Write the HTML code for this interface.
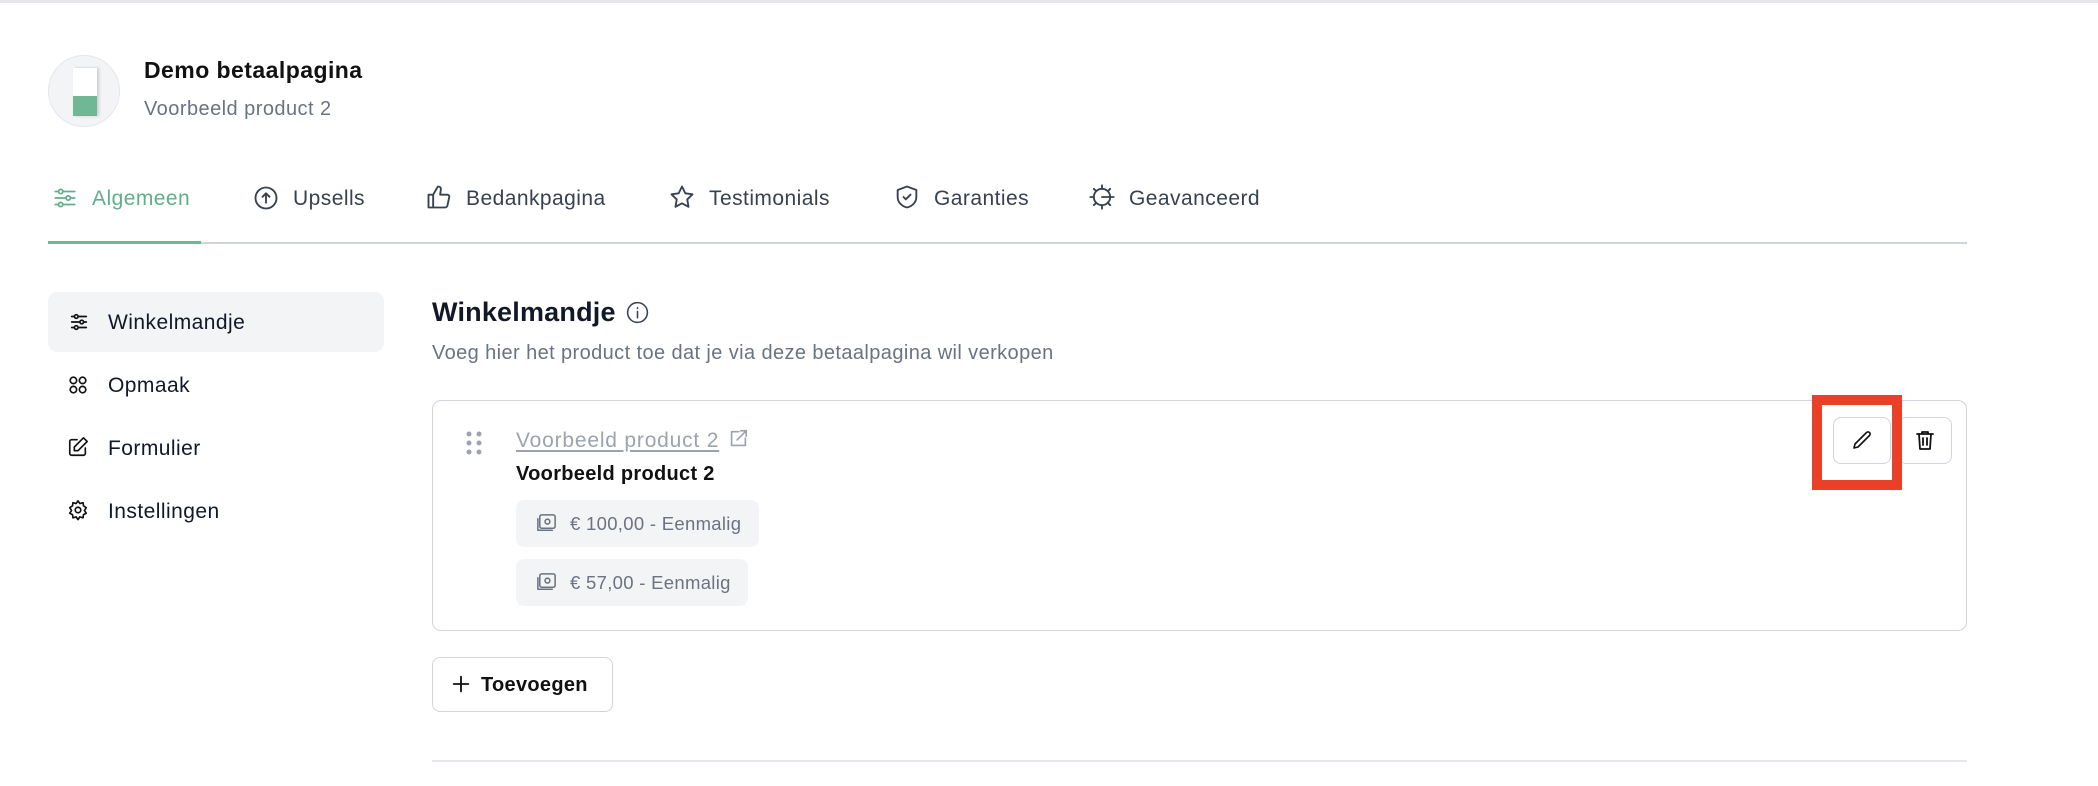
<!DOCTYPE html>
<html><head><meta charset="utf-8"><style>
*{box-sizing:border-box;margin:0;padding:0}
body{width:2098px;height:786px;background:#fff;font-family:"Liberation Sans",sans-serif;position:relative;overflow:hidden;color:#111827;letter-spacing:0.45px}
.a{position:absolute;white-space:nowrap}
svg{position:absolute;fill:none;stroke-linecap:round;stroke-linejoin:round}
.tab{font-size:21px;color:#374151;top:187px}
.side{font-size:21px;color:#111827;left:108px}
</style></head><body>
<div class="a" style="left:0;top:0;width:2098px;height:3px;background:#e5e7eb"></div>
<div class="a" style="left:48px;top:55px;width:72px;height:72px;border-radius:50%;background:#f3f4f6;border:1px solid #e5e7eb;overflow:hidden">
 <div class="a" style="left:24px;top:12px;width:24px;height:48px;background:#fff;box-shadow:2px 0 3px #ccc"></div>
 <div class="a" style="left:24px;top:40px;width:24px;height:20px;background:#6fb895"></div>
</div>
<div class="a" style="left:144px;top:57px;font-size:23px;font-weight:bold;color:#111">Demo betaalpagina</div>
<div class="a" style="left:144px;top:98px;font-size:20px;color:#6b7280">Voorbeeld product 2</div>

<svg style="left:52px;top:185px" width="26" height="26" viewBox="0 0 24 24" stroke="#5fae8c" stroke-width="1.6"><path d="M3 6h18M3 12h18M3 18h18"/><circle cx="8" cy="6" r="2" fill="#fff"/><circle cx="15" cy="12" r="2" fill="#fff"/><circle cx="8" cy="18" r="2" fill="#fff"/></svg>
<div class="a tab" style="left:92px;color:#5fae8c">Algemeen</div>
<svg style="left:252px;top:184px" width="28" height="28" viewBox="0 0 24 24" stroke="#374151" stroke-width="1.6"><circle cx="12" cy="12" r="9"/><path d="M12 16V8M9 11l3-3 3 3"/></svg>
<div class="a tab" style="left:293px">Upsells</div>
<svg style="left:425px;top:183px" width="28" height="28" viewBox="0 0 24 24" stroke="#374151" stroke-width="1.6"><path d="M7 10v11H3V10h4zM7 10l4-7c2 0 3 1 2.5 3L13 10h6c1.2 0 2 1 1.8 2l-1.5 7c-.2 1-1 2-2 2H7"/></svg>
<div class="a tab" style="left:466px">Bedankpagina</div>
<svg style="left:668px;top:183px" width="28" height="28" viewBox="0 0 24 24" stroke="#374151" stroke-width="1.6"><path d="M12 3l2.8 5.8 6.2.9-4.5 4.4 1.1 6.3L12 17.4l-5.6 3 1.1-6.3L3 9.7l6.2-.9z"/></svg>
<div class="a tab" style="left:709px">Testimonials</div>
<svg style="left:893px;top:183px" width="28" height="28" viewBox="0 0 24 24" stroke="#374151" stroke-width="1.6"><path d="M12 3l8 3v6c0 5-4 8-8 9-4-1-8-4-8-9V6z"/><path d="M9 12l2 2 4-4"/></svg>
<div class="a tab" style="left:934px">Garanties</div>
<svg style="left:1088px;top:183px" width="28" height="28" viewBox="0 0 24 24" stroke="#374151" stroke-width="1.6"><circle cx="12" cy="12" r="7"/><path d="M12 2v3M12 19v3M2 12h3M19 12h3M5 5l2 2M17 17l2 2M5 19l2-2M17 7l2-2M12 12h7"/></svg>
<div class="a tab" style="left:1129px">Geavanceerd</div>
<div class="a" style="left:48px;top:242px;width:1919px;height:2px;background:#d1d5db"></div>
<div class="a" style="left:48px;top:241px;width:153px;height:3px;background:#6fb895"></div>

<div class="a" style="left:48px;top:292px;width:336px;height:60px;border-radius:9px;background:#f3f4f6"></div>
<svg style="left:68px;top:311px" width="22" height="22" viewBox="0 0 24 24" stroke="#111" stroke-width="1.8"><path d="M4 6h16M4 12h16M4 18h16"/><circle cx="9" cy="6" r="2" fill="#f3f4f6"/><circle cx="15" cy="12" r="2" fill="#f3f4f6"/><circle cx="9" cy="18" r="2" fill="#f3f4f6"/></svg>
<div class="a side" style="top:311px">Winkelmandje</div>
<svg style="left:67px;top:374px" width="22" height="22" viewBox="0 0 24 24" stroke="#111" stroke-width="1.8"><circle cx="7" cy="7" r="3.5"/><circle cx="17" cy="7" r="3.5"/><circle cx="7" cy="17" r="3.5"/><circle cx="17" cy="17" r="3.5"/></svg>
<div class="a side" style="top:374px">Opmaak</div>
<svg style="left:67px;top:436px" width="22" height="22" viewBox="0 0 24 24" stroke="#111" stroke-width="1.8"><path d="M11 4H5a2 2 0 0 0-2 2v13a2 2 0 0 0 2 2h13a2 2 0 0 0 2-2v-6"/><path d="M18 2l4 4-10 10H8v-4z"/></svg>
<div class="a side" style="top:437px">Formulier</div>
<svg style="left:67px;top:499px" width="22" height="22" viewBox="0 0 24 24" stroke="#111" stroke-width="1.8"><circle cx="12" cy="12" r="3"/><path d="M12 2l2 3 3.5-1 .5 3.5 3 2-2 3 2 3-3 1.5-.5 3.5-3.5-1-2 3-2-3-3.5 1-.5-3.5-3-1.5 2-3-2-3 3-2 .5-3.5L10 5z"/></svg>
<div class="a side" style="top:500px">Instellingen</div>

<div class="a" style="left:432px;top:297px;font-size:27px;font-weight:bold;color:#111827;letter-spacing:0.2px">Winkelmandje</div>
<svg style="left:625px;top:300px" width="25" height="25" viewBox="0 0 24 24" stroke="#374151" stroke-width="1.5"><circle cx="12" cy="12" r="9.5"/><path d="M12 11v6M12 7.5v.5"/></svg>
<div class="a" style="left:432px;top:342px;font-size:20px;color:#6b7280;letter-spacing:0.4px">Voeg hier het product toe dat je via deze betaalpagina wil verkopen</div>

<div class="a" style="left:432px;top:400px;width:1535px;height:231px;border:1.5px solid #d1d5db;border-radius:9px"></div>
<svg style="left:464px;top:430px" width="20" height="26" viewBox="0 0 20 26" stroke="none"><g fill="#9ca3af"><circle cx="5" cy="4" r="2.5"/><circle cx="15" cy="4" r="2.5"/><circle cx="5" cy="13" r="2.5"/><circle cx="15" cy="13" r="2.5"/><circle cx="5" cy="22" r="2.5"/><circle cx="15" cy="22" r="2.5"/></g></svg>
<div class="a" style="left:516px;top:429px;font-size:21px;color:#9ca3af;text-decoration:underline;text-underline-offset:3px;letter-spacing:0.8px">Voorbeeld product 2</div>
<svg style="left:727px;top:428px" width="22" height="22" viewBox="0 0 24 24" stroke="#9ca3af" stroke-width="1.8"><path d="M13 4H5v15h15v-8M15 3h6v6M21 3L11 13"/></svg>
<div class="a" style="left:516px;top:463px;font-size:20px;font-weight:bold;color:#111;letter-spacing:0.3px">Voorbeeld product 2</div>
<div class="a" style="left:516px;top:500px;width:243px;height:47px;border-radius:8px;background:#f3f4f6"></div>
<div class="a" style="left:516px;top:559px;width:232px;height:47px;border-radius:8px;background:#f3f4f6"></div>
<svg style="left:535px;top:512px" width="23" height="23" viewBox="0 0 24 24" stroke="#6b7280" stroke-width="1.6"><rect x="5" y="3" width="16" height="14" rx="2"/><circle cx="13" cy="10" r="2.5"/><path d="M3 7v12h15"/></svg>
<svg style="left:535px;top:571px" width="23" height="23" viewBox="0 0 24 24" stroke="#6b7280" stroke-width="1.6"><rect x="5" y="3" width="16" height="14" rx="2"/><circle cx="13" cy="10" r="2.5"/><path d="M3 7v12h15"/></svg>
<div class="a" style="left:570px;top:513px;font-size:18.5px;color:#6b7280;letter-spacing:0.3px">€ 100,00 - Eenmalig</div>
<div class="a" style="left:570px;top:572px;font-size:18.5px;color:#6b7280;letter-spacing:0.3px">€ 57,00 - Eenmalig</div>

<div class="a" style="left:1833px;top:417px;width:58px;height:47px;border:1.5px solid #d1d5db;border-radius:8px"></div>
<div class="a" style="left:1898px;top:417px;width:54px;height:47px;border:1.5px solid #d1d5db;border-radius:8px"></div>
<svg style="left:1850px;top:429px" width="24" height="24" viewBox="0 0 24 24" stroke="#111" stroke-width="1.6"><path d="M16.5 3.5a2 2 0 0 1 3 3L8 18l-4 1 1-4z"/></svg>
<svg style="left:1913px;top:428px" width="24" height="24" viewBox="0 0 24 24" stroke="#111" stroke-width="1.8"><path d="M4 6h16M9 6V4h6v2M6 6l1 15h10l1-15M10 10v7M14 10v7"/></svg>
<div class="a" style="left:1812px;top:395px;width:90px;height:95px;border:10px solid #e94027"></div>

<div class="a" style="left:432px;top:657px;width:181px;height:55px;border:1.5px solid #d1d5db;border-radius:8px;font-size:20px;font-weight:bold;color:#111;padding:16px 0 0 48px;letter-spacing:0.3px">Toevoegen</div>
<svg style="left:450px;top:673px" width="22" height="22" viewBox="0 0 24 24" stroke="#111" stroke-width="2"><path d="M12 4v16M4 12h16"/></svg>
<div class="a" style="left:432px;top:760px;width:1535px;height:1.5px;background:#e5e7eb"></div>
</body></html>
